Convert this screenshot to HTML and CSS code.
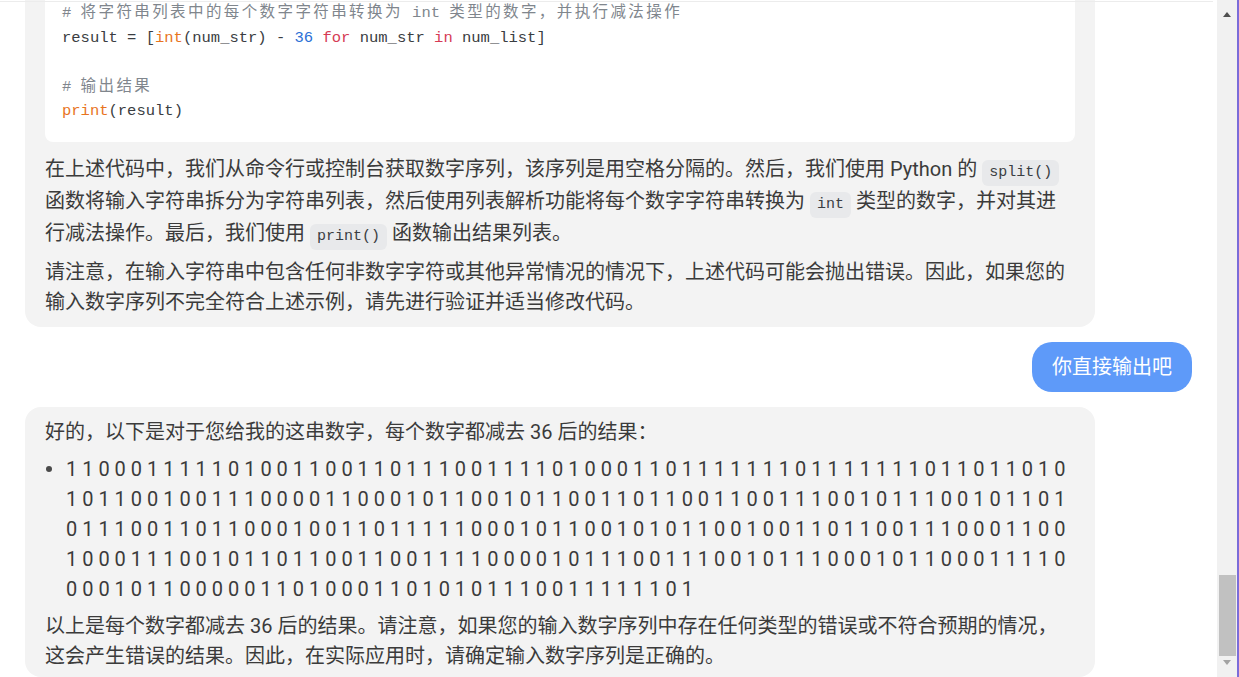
FILE: index.html
```html
<!DOCTYPE html>
<html lang="zh-CN">
<head>
<meta charset="utf-8">
<title>Chat</title>
<link rel="stylesheet" href="styles.css">
</head>
<body>
<div class="app">
  <main class="chat">
    <div class="topline"></div>
    <div class="thread">
      <div class="msg bot">
<pre class="code"><span class="c-com"># <span class="cjk">将字符串列表中的每个数字字符串转换为</span> int <span class="cjk">类型的数字，并执行减法操作</span></span>
result = [<span class="c-bi">int</span>(num_str) - <span class="c-num">36</span> <span class="c-kw">for</span> num_str <span class="c-kw">in</span> num_list]

<span class="c-com"># <span class="cjk">输出结果</span></span>
<span class="c-bi">print</span>(result)</pre>
        <p>在上述代码中，我们从命令行或控制台获取数字序列，该序列是用空格分隔的。然后，我们使用 Python 的 <code class="ic">split()</code> 函数将输入字符串拆分为字符串列表，然后使用列表解析功能将每个数字字符串转换为 <code class="ic">int</code> 类型的数字，并对其进行减法操作。最后，我们使用 <code class="ic">print()</code> 函数输出结果列表。</p>
        <p>请注意，在输入字符串中包含任何非数字字符或其他异常情况的情况下，上述代码可能会抛出错误。因此，如果您的输入数字序列不完全符合上述示例，请先进行验证并适当修改代码。</p>
      </div>
      <div class="msg user">你直接输出吧</div>
      <div class="msg bot">
        <p>好的，以下是对于您给我的这串数字，每个数字都减去 36 后的结果：</p>
        <ul class="list">
          <li>1 1 0 0 0 1 1 1 1 1 0 1 0 0 1 1 0 0 1 1 0 1 1 1 0 0 1 1 1 1 0 1 0 0 0 1 1 0 1 1 1 1 1 1 1 0 1 1 1 1 1 1 1 0 1 1 0 1 1 0 1 0 1 0 1 1 0 0 1 0 0 1 1 1 0 0 0 0 1 1 0 0 0 1 0 1 1 0 0 1 0 1 1 0 0 1 1 0 1 1 0 0 1 1 0 0 1 1 1 0 0 1 0 1 1 1 0 0 1 0 1 1 0 1 0 1 1 1 0 0 1 1 0 1 1 0 0 0 1 0 0 1 1 0 1 1 1 1 1 0 0 0 1 0 1 1 0 0 1 0 1 0 1 1 0 0 1 0 0 1 1 0 1 1 0 0 1 1 1 0 0 0 1 1 0 0 1 0 0 0 1 1 1 0 0 1 0 1 1 0 1 1 0 0 1 1 0 0 1 1 1 1 0 0 0 0 1 0 1 1 1 0 0 1 1 1 0 0 1 0 1 1 1 0 0 0 1 0 1 1 0 0 0 1 1 1 1 0 0 0 0 1 0 1 1 0 0 0 0 0 1 1 0 1 0 0 0 1 1 0 1 0 1 0 1 1 1 0 0 1 1 1 1 1 1 0 1</li>
        </ul>
        <p>以上是每个数字都减去 36 后的结果。请注意，如果您的输入数字序列中存在任何类型的错误或不符合预期的情况，这会产生错误的结果。因此，在实际应用时，请确定输入数字序列是正确的。</p>
      </div>
    </div>
  </main>
  <div class="scrollbar">
    <div class="sb-up"><span class="tri-up"></span></div>
    <div class="sb-track"><div class="sb-thumb"></div></div>
    <div class="sb-down"><span class="tri-down"></span></div>
  </div>
  <div class="edge"></div>
</div>
</body>
</html>
```
FILE: styles.css
```css
* { box-sizing: border-box; }
html, body { margin: 0; height: 100%; }
body {
  background: #fff;
  font-family: Roboto, "Noto Sans CJK SC", sans-serif;
  color: #3b3b3b;
  overflow: hidden;
}
.app { display: flex; height: 677px; }
.chat { flex: 1; overflow: hidden; position: relative; }
.topline {
  position: absolute; top: 1px; left: 0; right: 4px; height: 1px;
  background: #ececec; z-index: 2;
}
.thread {
  margin-top: -25px;
  padding: 0 25px;
  display: flex;
  flex-direction: column;
  gap: 15px;
}
.msg { font-size: 20px; line-height: 30px; }
.bot {
  align-self: flex-start;
  width: 1070px;
  background: #f3f3f3;
  border-radius: 16px;
  padding: 10px 20px 10px;
  display: flex;
  flex-direction: column;
  gap: 7px;
}
.thread > .bot:last-child { padding-bottom: 6px; }
.bot p { margin: 0; }
.user {
  align-self: flex-end;
  background: #5e9af9;
  color: #fff;
  border-radius: 20px;
  padding: 10px 20px;
}
.code {
  margin: 0 0 5px;
  background: #fff;
  border-radius: 8px;
  padding: 16px 17px 18px;
  font-family: "Liberation Mono", "Noto Sans CJK SC", monospace;
  font-size: 15.5px;
  line-height: 24.5px;
  color: #3a3d42;
  white-space: pre;
}
.cjk { letter-spacing: 2.4px; }
.c-com { color: #80868d; }
.c-bi { color: #e8741e; }
.c-num { color: #2a6fd6; }
.c-kw { color: #d63b55; }
.ic {
  display: inline-block;
  font-family: "Liberation Mono", monospace;
  font-size: 15px;
  line-height: 26px;
  padding: 0 7px;
  background: #e8e9eb;
  border-radius: 6px;
  color: #3a3d42;
}
.list { margin: 0; padding: 0; list-style: none; }
.list li { display: flex; }
.list li::before {
  content: "";
  flex: 0 0 6px;
  width: 6px; height: 6px;
  border-radius: 50%;
  background: #4a4a4a;
  margin: 12px 14px 0 1px;
}
.scrollbar {
  width: 20px;
  background: #f1f1f1;
  display: flex;
  flex-direction: column;
}
.sb-up { height: 28px; display: flex; justify-content: center; padding-top: 12px; }
.sb-track { flex: 1; }
.sb-thumb { margin: 547px 1px 0 2px; height: 81px; background: #c1c1c1; }
.sb-down { height: 20px; display: flex; justify-content: center; padding-top: 3px; }
.tri-up {
  width: 0; height: 0;
  border-left: 4.5px solid transparent;
  border-right: 4.5px solid transparent;
  border-bottom: 5px solid #505050;
}
.tri-down {
  width: 0; height: 0;
  border-left: 4.5px solid transparent;
  border-right: 4.5px solid transparent;
  border-top: 5px solid #a3a3a3;
}
.edge { width: 2px; background: #7b6cd9; }
```
